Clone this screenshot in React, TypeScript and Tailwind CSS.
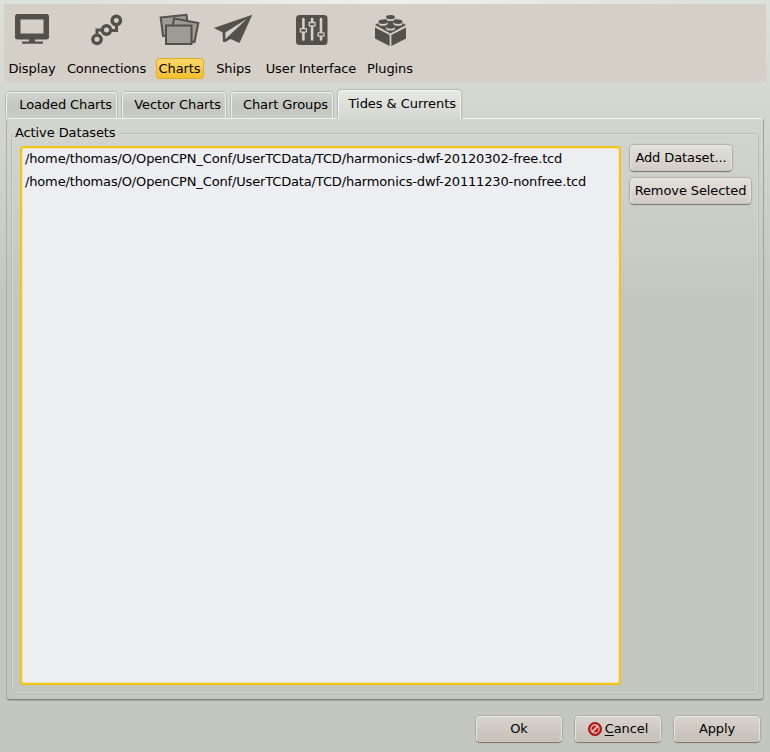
import React from "react";

const INK = "#52514c";
const LIGHT = "#d4cfc7";

function DisplayIcon() {
  return (
    <svg width="42" height="40" viewBox="11 10 42 40" fill={INK}>
      <path fillRule="evenodd" d="M17.500 14h29a2.500 2.500 0 0 1 2.500 2.500v20.500a2.500 2.500 0 0 1-2.500 2.500h-29a2.500 2.500 0 0 1-2.500-2.500V16.500A2.500 2.500 0 0 1 17.500 14zM20.500 19.500v14h23v-14z" />
      <path d="M29 39h6v2.500h8v2.200H22v-2.200h7z" />
    </svg>
  );
}

function ConnectionsIcon() {
  return (
    <svg width="42" height="40" viewBox="86 10 42 40" fill="none" stroke={INK}>
      <path strokeWidth="3" d="M97 36V30h7M109 30.500h7.500V24" />
      <g strokeWidth="3.400" fill={LIGHT}>
        <circle cx="97" cy="39.300" r="4.200" />
        <circle cx="106.500" cy="30" r="4.200" />
        <circle cx="116.300" cy="20.500" r="4.200" />
      </g>
    </svg>
  );
}

function ChartsIcon() {
  return (
    <svg width="42" height="40" viewBox="158.5 10 42 40" fill="#9c9b95" stroke={INK} strokeWidth="2">
      <path d="M160.200 17.500 186 14.800 188.500 34 162.500 36z" />
      <path d="M173.500 18.500 197.800 23 194 42 170 38z" />
      <path d="M165.500 25.500H191V44H165.500z" />
    </svg>
  );
}

function ShipsIcon() {
  return (
    <svg width="42" height="40" viewBox="213 10 42 40">
      <path fill={INK} d="M252.300 14.800 213.800 28 222.500 32.300 223 42 225.500 42 230.500 39 239.500 43z" />
      <path fill={LIGHT} d="M247 18.700 225.300 32.500 225.500 39z" />
    </svg>
  );
}

function SlidersIcon() {
  return (
    <svg width="42" height="40" viewBox="290 10 42 40">
      <rect x="296" y="15" width="31.500" height="30" rx="3.500" fill={INK} />
      <g stroke={LIGHT} strokeWidth="2.600" strokeLinecap="round">
        <path d="M303.400 19V39.500M312.100 19V39.500M321 19V39.500" />
      </g>
      <g fill={INK} stroke={LIGHT} strokeWidth="1.300">
        <rect x="300.400" y="28.700" width="6" height="3.400" rx=".5" />
        <rect x="309.100" y="22.500" width="6" height="3.400" rx=".5" />
        <rect x="318" y="32.800" width="6" height="3.400" rx=".5" />
      </g>
    </svg>
  );
}

const studs = [
  [390.5, 17.3],
  [383, 22],
  [398, 22],
  [390.5, 26.8],
];

function PluginsIcon() {
  return (
    <svg width="42" height="40" viewBox="369 10 42 40" fill={INK}>
      <path d="M375 27.500 389.600 35V46L375 38.500zM406 27.500 391.400 35V46L406 38.500z" />
      <path d="M390.500 16 406 25 390.500 33.500 375 25z" />
      {studs.map(([x, y]) => (
        <g key={`${x}-${y}`}>
          <ellipse cx={x} cy={y + 1.2} rx="4.600" ry="2.600" fill={LIGHT} />
          <ellipse cx={x} cy={y - 0.2} rx="4.400" ry="2.200" />
        </g>
      ))}
    </svg>
  );
}

const sections = [
  { label: "Display", width: "w-[52px]", Icon: DisplayIcon },
  { label: "Connections", width: "w-[97px]", Icon: ConnectionsIcon },
  { label: "Charts", width: "w-[49px]", Icon: ChartsIcon, selected: true },
  { label: "Ships", width: "w-[59px]", Icon: ShipsIcon },
  { label: "User Interface", width: "w-[96px]", Icon: SlidersIcon },
  { label: "Plugins", width: "w-[62px]", Icon: PluginsIcon },
];

const tabs = [
  { label: "Loaded Charts", width: "w-[111px]" },
  { label: "Vector Charts", width: "w-[104px]" },
  { label: "Chart Groups", width: "w-[102px]" },
];

const datasets = [
  "/home/thomas/O/OpenCPN_Conf/UserTCData/TCD/harmonics-dwf-20120302-free.tcd",
  "/home/thomas/O/OpenCPN_Conf/UserTCData/TCD/harmonics-dwf-20111230-nonfree.tcd",
];

function Button({ className, children }: { className: string; children: React.ReactNode }) {
  return (
    <button
      className={`flex h-[26px] items-center justify-center whitespace-nowrap rounded-[4px] border border-[#e6e4df] border-b-[#c9c5be] bg-linear-to-b shadow-[0_1px_1px_#777872,0_0_1px_1px_#aeb0a9] ${className}`}
    >
      {children}
    </button>
  );
}

export default function App() {
  return (
    <div className="flex h-[752px] w-[770px] flex-col overflow-hidden bg-[radial-gradient(ellipse_330px_64px_at_50%_0,#eef0ecff,#eef0ec00),linear-gradient(#dde1db_0,#d5d8d1_90px,#d0d3cb_160px,#c4c7bf_300px)] px-1 pt-1 font-['DejaVu_Sans',sans-serif] text-[13px] leading-[16px] tracking-[-0.1px] text-black">
      <nav className="flex h-[78px] shrink-0 bg-[#d4cfc7] pl-[2px]">
        {sections.map(({ label, width, Icon, selected }) => (
          <div key={label} className={`flex shrink-0 flex-col items-center pt-[6px] ${width}`}>
            <Icon />
            <span
              className={`mt-2 flex h-[21px] items-center whitespace-nowrap ${
                selected ? "w-12 justify-center rounded-[3px] border border-[#e5ad1d] bg-linear-to-b from-[#fdd766] to-[#f5c02c]" : ""
              }`}
            >
              {label}
            </span>
          </div>
        ))}
      </nav>

      <div className="z-10 mt-2 ml-[2px] flex h-[29px] shrink-0 items-end">
        {tabs.map(({ label, width }) => (
          <div
            key={label}
            className={`mr-[5px] flex h-[27px] items-center justify-end whitespace-nowrap rounded-t-[4px] border border-b-0 border-[#eef0ec] bg-linear-to-b from-[#d2d5ce] via-[#c3c6be] to-[#cbcec6] pr-1 pb-[3px] shadow-[0_0_1px_1px_#b4b7b0] [clip-path:inset(-2px_-2px_1px_-2px)] ${width}`}
          >
            {label}
          </div>
        ))}
        <div className="flex h-[29px] w-[123px] items-center justify-end whitespace-nowrap rounded-t-[4px] border border-b-0 border-[#f4f6f3] bg-linear-to-b from-[#e6e8e4] to-[#d4d7d0] pr-1 pb-[2px] tracking-[-0.05px] shadow-[0_0_1px_1px_#b4b7b0] [clip-path:inset(-2px_-2px_0_-2px)]">
          Tides &amp; Currents
        </div>
      </div>

      <main className="-mt-px ml-[2px] h-[582px] w-[758px] shrink-0 rounded-[4px] border border-t-[#f0f2ee] border-r-[#9fa19b] border-b-[#80827c] border-l-[#a9aca5] px-1 pt-1 shadow-[0_1px_0_#a5a8a0]">
        <fieldset className="h-[571px] w-[748px] px-0">
          <div className="flex h-[20px] items-center">
            <span className="ml-[4px] whitespace-nowrap">Active Datasets</span>
            <span className="mr-[3px] ml-[3px] h-px flex-1 bg-[#b9bcb5] shadow-[0_1px_0_#dfe1dc]" />
          </div>
          <div className="-mt-[10px] h-[561px] rounded-[4px] border border-t-0 border-[#b9bcb5] shadow-[inset_1px_0_0_#d5d7d1,inset_-1px_-1px_0_#d5d7d1]">
            <div className="flex pt-[13px] pl-2">
              <div className="h-[539px] w-[601px] rounded-[4px] border-2 border-[#f3c518] bg-[#eceef2] pl-[3px] tracking-[-0.15px] shadow-[inset_0_0_1px_1px_#f3e6bb]">
                {datasets.map((path) => (
                  <div key={path} className="flex h-[23px] items-center whitespace-nowrap pb-[2px]">{path}</div>
                ))}
              </div>
              <div className="-mt-px ml-[9px] flex flex-col items-start gap-[7px]">
                <Button className="w-[102px] from-[#e2e0db] to-[#d3cdc6]">Add Dataset...</Button>
                <Button className="w-[121px] from-[#e2e0db] to-[#d3cdc6]">Remove Selected</Button>
              </div>
            </div>
          </div>
        </fieldset>
      </main>

      <footer className="mt-4 mr-[6px] flex justify-end gap-[13px]">
        <Button className="w-[86px] from-[#d8d4ce] to-[#c5c0b8]">Ok</Button>
        <Button className="w-[86px] from-[#d8d4ce] to-[#c5c0b8]">
          <svg className="mr-[3px]" width="14" height="14" viewBox="0 0 14 14">
            <circle cx="7" cy="7" r="6.600" fill="#c01a18" stroke="#8f1111" strokeWidth=".8" />
            <circle cx="7" cy="7" r="4.100" fill="none" stroke="#e3d4d0" strokeWidth="1.100" />
            <path d="M4.200 9.800l5.600-5.600" stroke="#e3d4d0" strokeWidth="1.800" />
          </svg>
          <span><span className="underline underline-offset-2">C</span>ancel</span>
        </Button>
        <Button className="w-[86px] from-[#d8d4ce] to-[#c5c0b8]">Apply</Button>
      </footer>
    </div>
  );
}
